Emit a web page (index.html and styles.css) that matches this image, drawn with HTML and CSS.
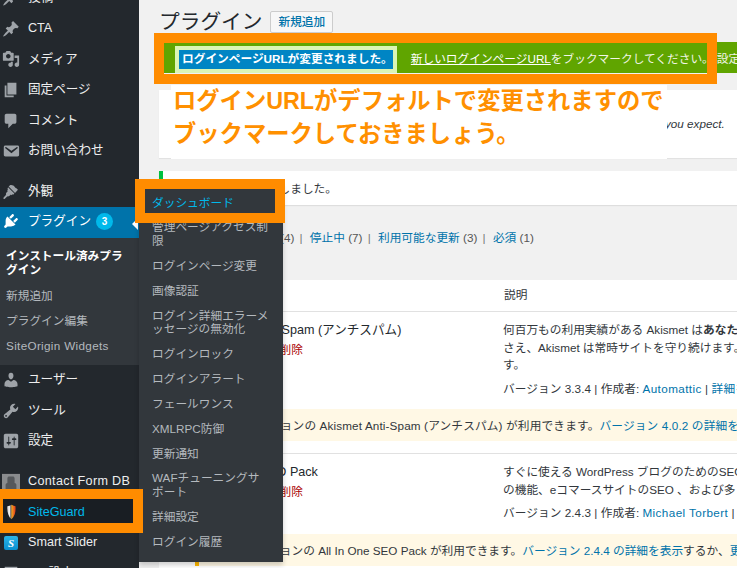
FILE: index.html
```html
<!DOCTYPE html>
<html lang="ja">
<head>
<meta charset="utf-8">
<title>プラグイン</title>
<link rel="stylesheet" href="styles.css">
</head>
<body>
<div class="app">
  <aside class="side">
    <nav class="menu">
      <a class="item"><svg class="ic" viewBox="0 0 20 20"><path d="M10.44 3.02l1.82-1.82 6.36 6.35-1.83 1.82c-1.05-.68-2.48-.57-3.41.36l-.75.75c-.92.93-1.04 2.35-.35 3.41l-1.83 1.82-2.41-2.41-2.8 2.79c-.42.42-3.38 2.71-3.8 2.29s1.86-3.39 2.28-3.81l2.79-2.79L4.1 9.36l1.83-1.82c1.05.69 2.48.57 3.4-.36l.75-.75c.93-.92 1.05-2.35.36-3.41z"/></svg>投稿</a>
      <a class="item"><svg class="ic" viewBox="0 0 20 20"><path d="M10.44 3.02l1.82-1.82 6.36 6.35-1.83 1.82c-1.05-.68-2.48-.57-3.41.36l-.75.75c-.92.93-1.04 2.35-.35 3.41l-1.83 1.82-2.41-2.41-2.8 2.79c-.42.42-3.38 2.71-3.8 2.29s1.86-3.39 2.28-3.81l2.79-2.79L4.1 9.36l1.83-1.82c1.05.69 2.48.57 3.4-.36l.75-.75c.93-.92 1.05-2.35.36-3.41z"/></svg>CTA</a>
      <a class="item"><svg class="ic" viewBox="0 0 20 20"><path d="M13 11V4c0-.55-.45-1-1-1h-1.67L9 1H5L3.67 3H2c-.55 0-1 .45-1 1v7c0 .55.45 1 1 1h10c.55 0 1-.45 1-1zM7 4.5c1.38 0 2.5 1.12 2.5 2.5S8.38 9.5 7 9.5 4.5 8.38 4.5 7 5.62 4.5 7 4.5zM14 6h5v10.5c0 1.38-1.12 2.5-2.5 2.5S14 17.88 14 16.5s1.12-2.5 2.5-2.5c.17 0 .34.02.5.05V9h-3V6zm-4 8.05V13h2v3.5c0 1.38-1.12 2.5-2.5 2.5S7 17.88 7 16.5 8.12 14 9.5 14c.17 0 .34.02.5.05z"/></svg>メディア</a>
      <a class="item"><svg class="ic" viewBox="0 0 20 20"><path d="M6 15V2h10v13H6zm-1 1h8v2H3V5h2v11z"/></svg>固定ページ</a>
      <a class="item"><svg class="ic" viewBox="0 0 20 20"><path d="M5 2h9c1.1 0 2 .9 2 2v7c0 1.1-.9 2-2 2h-2l-5 5v-5H5c-1.1 0-2-.9-2-2V4c0-1.1.9-2 2-2z"/></svg>コメント</a>
      <a class="item"><svg class="ic" viewBox="0 0 20 20"><path d="M3.87 4h13.25C18.37 4 19 4.59 19 5.79v8.42c0 1.19-.63 1.79-1.88 1.79H3.87c-1.25 0-1.88-.6-1.88-1.79V5.79c0-1.2.63-1.79 1.88-1.79zm6.62 8.6l6.74-5.53c.24-.2.43-.66.13-1.07-.29-.41-.82-.42-1.17-.17l-5.7 3.86L4.8 5.83c-.35-.25-.88-.24-1.17.17-.3.41-.11.87.13 1.07z"/></svg>お問い合わせ</a>
      <div class="sep"></div>
      <a class="item"><svg class="ic" viewBox="0 0 20 20"><path d="M14.48 11.06L7.41 3.99l1.5-1.5c.5-.56 2.3-.47 3.59.32 1.29.8 1.35 1.31 2.16 2.12.8.81 1.38.9 1.38.9l1.63 1.63-1.67 2.1zM6.7 4.7l7.07 7.07-1.41 1.41-.71-.7-1.06 1.05-.71-.7-1.06 1.06c-.7.7-2.12 1.4-2.82.7l-2.8 2.83c-.39.39-1.03.39-1.42 0-.39-.39-.39-1.03 0-1.42l2.83-2.83c-.7-.7 0-2.12.7-2.82l1.06-1.06-.7-.71 1.06-1.06-.71-.7z"/></svg>外観</a>
      <a class="item item-on"><svg class="ic" viewBox="0 0 20 20"><path d="M13.11 4.36L9.87 7.6 8 5.73l3.24-3.24c.35-.34 1.05-.2 1.56.32.52.51.66 1.21.31 1.55zm-8 1.77l.91-1.12 9.01 9.01-1.19.84c-.71.71-2.63 1.16-3.82 1.16H6.14L4.9 17.26c-.59.59-1.54.59-2.12 0-.59-.58-.59-1.53 0-2.12l1.24-1.24v-3.88c0-1.13.4-3.19 1.09-3.89zm7.26 3.97l3.24-3.24c.34-.35 1.04-.21 1.55.31.52.51.66 1.21.31 1.55l-3.24 3.25z"/></svg>プラグイン<span class="badge">3</span></a>
      <div class="sub">
        <a class="sub-item sub-cur">インストール済みプラグイン</a>
        <a class="sub-item">新規追加</a>
        <a class="sub-item">プラグイン編集</a>
        <a class="sub-item latin">SiteOrigin Widgets</a>
      </div>
      <a class="item"><svg class="ic" viewBox="0 0 20 20"><path d="M10 9.25c-2.27 0-2.73-3.44-2.73-3.44C7 4.02 7.82 2 9.97 2c2.16 0 2.98 2.02 2.71 3.81 0 0-.41 3.44-2.68 3.44zm0 2.57L12.72 10c2.39 0 4.52 2.33 4.52 4.53v2.49s-3.65 1.13-7.24 1.13c-3.65 0-7.24-1.13-7.24-1.13v-2.49c0-2.25 1.94-4.48 4.47-4.48z"/></svg>ユーザー</a>
      <a class="item"><svg class="ic" viewBox="0 0 20 20"><path d="M16.68 9.77c-1.34 1.34-3.3 1.67-4.95.99l-5.41 6.52c-.99.99-2.59.99-3.58 0s-.99-2.59 0-3.57l6.52-5.42c-.68-1.65-.35-3.61.99-4.95 1.28-1.28 3.12-1.62 4.72-1.06l-2.89 2.89 2.82 2.82 2.86-2.87c.53 1.58.18 3.39-1.08 4.65zM3.81 16.21c.4.39 1.04.39 1.43 0 .4-.4.4-1.04 0-1.43-.39-.4-1.03-.4-1.43 0-.39.39-.39 1.03 0 1.43z"/></svg>ツール</a>
      <a class="item"><svg class="ic" viewBox="0 0 20 20"><path d="M18 16V4c0-1.1-.9-2-2-2H4c-1.1 0-2 .9-2 2v12c0 1.1.9 2 2 2h12c1.1 0 2-.9 2-2zM8 11h1c.55 0 1 .45 1 1s-.45 1-1 1H8v1.5c0 .28-.22.5-.5.5s-.5-.22-.5-.5V13H6c-.55 0-1-.45-1-1s.45-1 1-1h1V5.5c0-.28.22-.5.5-.5s.5.22.5.5V11zm5-2h-1c-.55 0-1-.45-1-1s.45-1 1-1h1V5.5c0-.28.22-.5.5-.5s.5.22.5.5V7h1c.55 0 1 .45 1 1s-.45 1-1 1h-1v5.5c0 .28-.22.5-.5.5s-.5-.22-.5-.5V9z"/></svg>設定</a>
      <div class="sep"></div>
      <a class="item latin"><svg class="ic" viewBox="0 0 20 20"><rect x="0" y="1" width="20" height="18" fill="#8a8c8e"/><path d="M4 19v-6c0-1 1-2 2-2V6c0-1.500 1-2 2-2h4c1 0 2 .5 2 2v5c1 0 2 1 2 2v6z" fill="#55585b"/></svg>Contact Form DB</a>
      <a class="item item-hover"><svg class="ic" viewBox="0 0 20 20"><defs><linearGradient id="sg" x1="0" x2="1" y1="0" y2="0"><stop offset="0" stop-color="#d8d8d8"/><stop offset=".3" stop-color="#f3f3f3"/><stop offset=".42" stop-color="#5a5a5a"/><stop offset=".55" stop-color="#f0a020"/><stop offset="1" stop-color="#e2341c"/></linearGradient></defs><path d="M10.500 2c1.800 1 3.500 1.500 4.500 1.500 .5 6-.5 11-4.500 14.500C7 15 5.500 9.500 6 3.500c1.800 0 3.200-.5 4.500-1.500z" fill="url(#sg)"/></svg>SiteGuard</a>
      <a class="item"><span class="slider-ic">S</span>Smart Slider</a>
      <a class="item"><svg class="ic" viewBox="0 0 20 20"><rect x="3" y="2" width="14" height="16"/></svg>WP設定</a>
    </nav>
  </aside>

  <main class="main">
    <header class="head">
      <h1 class="title">プラグイン</h1>
      <a class="add">新規追加</a>
    </header>

    <div class="notice-green">
      <strong class="chip">ログインページURLが変更されました。</strong>
      <a class="newurl">新しいログインページURL</a><span>をブックマークしてください。</span><span class="conf">設定変更</span>
    </div>

    <div class="welcome"><em>you expect.</em></div>

    <div class="success">プラグインを更新しました。</div>

    <p class="filters">すべて (13) <i>|</i> <a>有効</a> (4) <i>|</i> <a>停止中</a> (7) <i>|</i> <a>利用可能な更新</a> (3) <i>|</i> <a>必須</a> (1)</p>

    <section class="table">
      <div class="thead"><div></div><div>説明</div></div>

      <div class="row">
        <div class="name"><div class="pname">Akismet Anti-Spam (アンチスパム)</div><div class="acts"><a>設定</a> | <a>無効化</a> | <a class="del">削除</a></div></div>
        <div class="desc">
          <p>何百万もの利用実績がある Akismet は<b>あなたのブログをスパムから保護する</b>最適な方法です。<br>さえ、Akismet は常時サイトを守り続けます。使用を開始するには以下の手順に従ってくださいま<br>す。</p>
          <p class="ver">バージョン 3.3.4 | 作成者: <a>Automattic</a> | <a>詳細を表示</a></p>
        </div>
      </div>
      <div class="update update-wide">新しいバージョンの Akismet Anti-Spam (アンチスパム) が利用できます。<a>バージョン 4.0.2 の詳細を表示</a>するか、<a>更新</a></div>

      <div class="row row2">
        <div class="name"><div class="pname">All In One SEO Pack</div><div class="acts"><a>設定</a> | <a>無効化</a> | <a class="del">削除</a></div></div>
        <div class="desc">
          <p>すぐに使える WordPress ブログのためのSEO 最適化プラグインです。<br>の機能、eコマースサイトのSEO 、および多くの機能を備えています。</p>
          <p class="ver">バージョン 2.4.3 | 作成者: <a>Michael Torbert</a> | <a>詳細を表示</a></p>
        </div>
      </div>
      <div class="update">新しいバージョンの All In One SEO Pack が利用できます。<a>バージョン 2.4.4 の詳細を表示</a>するか、<a>更新</a></div>
    </section>
  </main>
</div>

<div class="arrow"></div>

<ul class="fly">
  <li class="fly-on">ダッシュボード</li>
  <li>管理ページアクセス制限</li>
  <li>ログインページ変更</li>
  <li>画像認証</li>
  <li>ログイン詳細エラーメッセージの無効化</li>
  <li>ログインロック</li>
  <li>ログインアラート</li>
  <li>フェールワンス</li>
  <li>XMLRPC防御</li>
  <li>更新通知</li>
  <li>WAFチューニングサ<br>ポート</li>
  <li>詳細設定</li>
  <li>ログイン履歴</li>
</ul>

<div class="ring ring-notice"></div>
<div class="ring ring-dash"></div>
<div class="ring ring-guard"></div>

<div class="note">ログインURLがデフォルトで変更されますので<br>ブックマークしておきましょう。</div>
</body>
</html>
```

FILE: styles.css
```css
* { box-sizing: border-box; }
html, body { margin: 0; padding: 0; height: 100%; overflow: hidden; }
body {
  position: relative;
  width: 737px;
  height: 568px;
  background: #f1f1f1;
  color: #32373c;
  font: 11.7px/1.4 "Liberation Sans", "Noto Sans CJK JP", sans-serif;
}
a { color: #0073aa; text-decoration: none; }

.app { display: flex; height: 568px; overflow: hidden; }

/* sidebar */
.side { flex: 0 0 139px; background: #23282d; overflow: hidden; }
.menu { margin-top: -17px; }
.item {
  display: flex;
  align-items: center;
  height: 30.6px;
  color: #eee;
  font-size: 12.6px;
  white-space: nowrap;
}
.latin { letter-spacing: .33px; }
.ic { width: 18px; height: 18px; margin: 0 8px 0 2px; flex: none; fill: #9ea3a8; }
.sep { height: 10px; }
.item-on { padding-bottom: 2px; background: #0073aa; color: #fff; }
.item-on .ic { fill: #fff; }
.item-hover { background: #191e23; color: #00b9eb; }
.badge {
  width: 17px;
  height: 17px;
  margin-left: 5px;
  border-radius: 50%;
  background: #00b9eb;
  color: #fff;
  font-size: 10px;
  font-weight: 700;
  line-height: 17px;
  text-align: center;
}
.slider-ic {
  width: 14px;
  height: 14px;
  margin: 0 10px 0 4px;
  border-radius: 2px;
  background: linear-gradient(#2bb5e8, #0a8fcf);
  color: #fff;
  font: italic 700 11px/14px "Liberation Serif", serif;
  text-align: center;
}
.sub { background: #32373c; padding: 8px 0 6.6px; }
.sub-item {
  display: block;
  padding: 4.6px 14px 4.6px 6px;
  color: #b4b9be;
  font-size: 11.7px;
  line-height: 15.6px;
}
.sub-cur { color: #fff; font-weight: 700; line-height: 14px; padding-top: 3px; padding-bottom: 7px; }

/* main */
.main { flex: 1; min-width: 0; padding: 10px 0 0 20px; }
.head { display: flex; align-items: flex-start; gap: 8px; height: 32px; }
.title { margin: 0; font-size: 20.7px; font-weight: 400; line-height: 23px; color: #23282d; }
.add {
  margin-top: 1px;
  height: 22px;
  padding: 0 7px;
  border: 1px solid #ccc;
  border-radius: 2px;
  background: #f7f7f7;
  font-size: 11.7px;
  font-weight: 500;
  line-height: 20px;
}
.notice-green {
  display: flex;
  align-items: center;
  height: 31px;
  padding: 4px 0 0 16px;
  background: #60a500;
  color: #f1f5e6;
  font-size: 11.7px;
  white-space: nowrap;
}
.chip {
  width: 224px;
  height: 27px;
  margin-right: 14px;
  padding-left: 3px;
  border: 4px solid #dbf5b5;
  background: #0085c4;
  color: #fff;
  font-weight: 700;
  line-height: 18px;
}
.newurl { color: #fff; text-decoration: underline; }
.conf { margin-left: 3px; }
.welcome {
  height: 68px;
  margin-top: 17px;
  padding: 26px 0 0 506px;
  background: #fff;
  box-shadow: 0 1px 1px rgba(0,0,0,.06);
  white-space: nowrap;
}
.success {
  height: 34px;
  margin-top: 13px;
  padding: 10px 0 0 22px;
  border-left: 4px solid #00c040;
  background: #fff;
  box-shadow: 0 1px 1px rgba(0,0,0,.08);
  font-size: 11.7px;
}
.filters { height: 75px; margin: 0; padding: 25px 0 0 21px; color: #555; white-space: nowrap; }
.filters i { font-style: normal; margin: 0 4px 0 2px; color: #777; }

.table { background: #fff; height: 288px; overflow: hidden; white-space: nowrap; }
.thead {
  display: grid;
  grid-template-columns: 345px 1fr;
  height: 32px;
  padding-top: 7px;
  border-bottom: 1px solid #e1e1e1;
  font-size: 11.7px;
}
.row { display: grid; grid-template-columns: 344px 1fr; height: 97px; padding-top: 9px; }
.row2 { height: 81px; margin-top: 12px; border-top: 1px solid #e1e1e1; }
.name { padding-left: 49px; }
.row2 .name { padding-left: 42px; }
.pname { font-size: 12.6px; line-height: 18px; color: #23282d; }
.acts { margin: 2px 0 0 -6px; line-height: 18px; }
.row2 .acts { margin-left: 1px; }
.del { color: #a00; }
.desc p { margin: 0; line-height: 17.6px; }
.desc .ver { margin-top: 6px; letter-spacing: .05px; }
.ver a { letter-spacing: .4px; }
.update {
  height: 32px;
  margin-left: 36px;
  padding: 9px 0 0 11px;
  border-left: 4px solid #ffb900;
  background: #fff8e5;
  white-space: nowrap;
}
.update-wide { letter-spacing: .14px; }

/* overlays */
.arrow {
  position: absolute;
  left: 132px;
  top: 218px;
  border: 6px solid transparent;
  border-right-color: #fff;
  border-left-width: 0;
}
.fly {
  position: absolute;
  left: 139px;
  top: 183px;
  width: 144px;
  height: 379px;
  margin: 0;
  padding: 7px 13px 0;
  list-style: none;
  background: #32373c;
  box-shadow: 0 3px 5px rgba(0,0,0,.2);
  color: #b4b9be;
  font-size: 11.7px;
  line-height: 13.8px;
}
.fly li { padding: 5.52px 0; }
.fly .fly-on { color: #00b9eb; }
.ring { position: absolute; border: 10px solid #ff8c00; }
.ring-notice { left: 154px; top: 33px; width: 563px; height: 51px; }
.ring-dash { left: 135px; top: 179px; width: 150px; height: 44px; }
.ring-guard { left: 0; top: 489px; width: 143px; height: 44px; border-left-width: 3px; }
.note {
  position: absolute;
  left: 171px;
  top: 85px;
  width: 496px;
  height: 74px;
  padding: 0 0 0 2px;
  background: #fff;
  color: #ff9000;
  font-size: 23.3px;
  font-weight: 700;
  line-height: 33px;
  white-space: nowrap;
}
```
